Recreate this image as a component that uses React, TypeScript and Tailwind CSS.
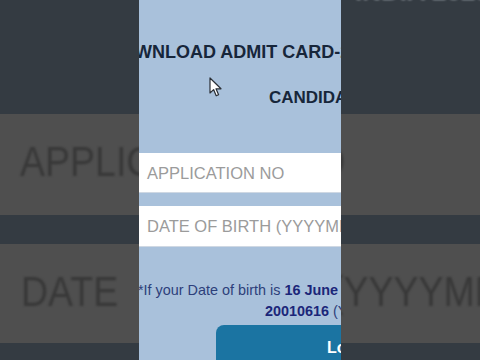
import React from "react";

const font = { fontFamily: '"Liberation Sans", Arial, sans-serif' };

const SideBands = ({ side }: { side: "left" | "right" }) => {
  return (
    <div className="flex flex-col w-[139px] h-full overflow-hidden shrink-0">
      <div className="h-[114px] bg-[#343b42] overflow-hidden">
        {side === "right" && (
          <div className="mt-[-28px] ml-[14px] whitespace-nowrap text-[26px] font-bold text-[#9aa1a8] blur-[1px]">
            INDIA 2023
          </div>
        )}
      </div>
      <div className="h-[101px] bg-[#4f4f4f] flex items-center overflow-hidden">
        {side === "left" ? (
          <span className="inline-block ml-[20px] mt-[-6px] whitespace-nowrap text-[37.5px] text-[#383838] scale-y-115 blur-[1px]">
            APPLICATION NO
          </span>
        ) : (
          <span className="inline-block ml-[-25px] mt-[-6px] whitespace-nowrap text-[37.5px] text-[#383838] scale-y-115 blur-[1px]">
            O
          </span>
        )}
      </div>
      <div className="h-[29px] bg-[#343b42]" />
      <div className="h-[99px] bg-[#4f4f4f] flex items-center overflow-hidden">
        {side === "left" ? (
          <span className="inline-block ml-[21px] mt-[-4px] whitespace-nowrap text-[37.5px] text-[#383838] scale-y-115 blur-[1px]">
            DATE
          </span>
        ) : (
          <span className="inline-block ml-[-10px] mt-[-4px] whitespace-nowrap text-[37.5px] text-[#383838] scale-y-115 blur-[1px]">
            (YYYYMMDD)
          </span>
        )}
      </div>
      <div className="flex-1 bg-[#343b42]" />
    </div>
  );
};

const Cursor = () => (
  <svg
    className="absolute left-[70px] top-[77px]"
    width="14"
    height="21"
    viewBox="0 0 14 21"
  >
    <path
      d="M1 1 L1 16 L4.6 12.6 L7.2 18.8 L9.6 17.8 L7 11.8 L12 11.8 Z"
      fill="#ffffff"
      stroke="#2a2f36"
      strokeWidth="1.2"
      strokeLinejoin="round"
    />
  </svg>
);

export default function App() {
  return (
    <div className="w-[480px] h-[360px] flex overflow-hidden bg-[#343b42]" style={font}>
      <SideBands side="left" />

      <div className="relative w-[202px] h-full shrink-0 overflow-hidden bg-[#a9c1db] flex flex-col">
        <div className="mt-[41px] ml-[-31px] whitespace-nowrap text-[18px] leading-[22px] font-bold text-[#17263a]">
          DOWNLOAD ADMIT CARD-2023
        </div>
        <div className="mt-[25px] ml-[130px] whitespace-nowrap text-[17px] leading-[20px] font-bold text-[#17263a]">
          CANDIDATE LOGIN
        </div>

        <div className="mt-[45px] h-[41px] bg-white flex items-center pl-[8px] pt-[1px] border-b border-[#cfd8e3]">
          <span className="whitespace-nowrap text-[16.5px] text-[#9b9b9b]">
            APPLICATION NO
          </span>
        </div>
        <div className="mt-[13px] h-[42px] bg-white flex items-center pl-[8px] pt-[1px] border-b border-[#cfd8e3]">
          <span className="whitespace-nowrap text-[16.5px] text-[#9b9b9b]">
            DATE OF BIRTH (YYYYMMDD)
          </span>
        </div>

        <div className="mt-[33px] ml-[-1px] whitespace-nowrap text-[14.4px] leading-[21px] text-[#2d3f7a]">
          *If your Date of birth is{" "}
          <b className="text-[#1b2679]">16 June 2001</b> then enter
        </div>
        <div className="ml-[126px] whitespace-nowrap text-[14.4px] leading-[21px] text-[#2d3f7a]">
          <b className="text-[#1b2679]">20010616</b> (YYYYMMDD)
        </div>

        <div className="mt-[3px] ml-[77px] w-[220px] flex-1 rounded-tl-lg bg-[#1b74a2] pl-[111px] pt-[11px]">
          <span className="whitespace-nowrap text-[16px] leading-[20px] font-bold text-white">
            Login
          </span>
        </div>

        <Cursor />
      </div>

      <SideBands side="right" />
    </div>
  );
}
